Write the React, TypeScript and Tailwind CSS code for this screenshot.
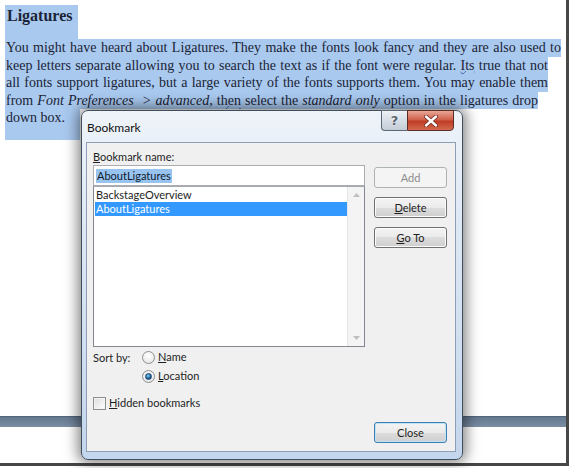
import React from "react";

const ui = "font-['Lato',sans-serif] text-[11px] text-[#1e1e1e]";

function WinButton({
  children,
  disabled,
  primary,
  className = "",
}: {
  children: React.ReactNode;
  disabled?: boolean;
  primary?: boolean;
  className?: string;
}) {
  if (disabled) {
    return (
      <div
        className={`h-[21px] w-[73px] rounded-[3px] border border-[#adb2b5] bg-[#f4f4f4] flex items-center justify-center text-[#8c8c8c] leading-none ${className}`}
      >
        {children}
      </div>
    );
  }
  return (
    <div
      className={`h-[21px] w-[73px] rounded-[3px] border ${
        primary ? "border-[#3c7fb1] shadow-[inset_0_0_0_1px_#bfe3f7]" : "border-[#707070] shadow-[inset_0_0_0_1px_#fcfcfc]"
      } bg-[linear-gradient(#f3f3f3,#ebebeb_50%,#dddddd_50%,#cfcfcf)] flex items-center justify-center leading-none ${className}`}
    >
      {children}
    </div>
  );
}

function Radio({ checked }: { checked?: boolean }) {
  return (
    <div className="w-[13px] h-[13px] rounded-full border border-[#8e8f8f] bg-[radial-gradient(circle_at_50%_35%,#ffffff,#e2e2e2)] flex items-center justify-center">
      {checked && (
        <div className="w-[7px] h-[7px] rounded-full bg-[radial-gradient(circle_at_40%_35%,#8fd0f5,#1d5e96_60%,#0e3a66)] border border-[#15446f]" />
      )}
    </div>
  );
}

export default function App() {
  const hl = "bg-[#a9c9ef]";
  const squiggle = "underline decoration-wavy decoration-[#3a5ea8] decoration-1 underline-offset-[0px]";
  return (
    <div className="relative w-[571px] h-[468px] bg-white overflow-hidden">
      <div className="w-[569px] h-[466px] border-r-[3px] border-b-[3px] border-[#474747] flex flex-col">
        <div className="pt-[5px] pl-[5px] font-['Liberation_Serif',serif] text-[#1b2436] text-[14px]">
          <div className={`${hl} w-[73px] h-[34px]`}>
            <div className="pl-[2px] text-[16px] font-bold leading-[22px]">Ligatures</div>
          </div>
          <div className={`${hl} w-[556px] h-[17.5px] leading-[17.5px] text-justify [text-align-last:justify] pl-[1px]`}>
            You might have heard about Ligatures. They make the fonts look fancy and they are also used to
          </div>
          <div className={`${hl} w-[543px] h-[17.5px] leading-[17.5px] text-justify [text-align-last:justify] pl-[1px]`}>
            keep letters separate allowing you to search the text as if the font were regular.{" "}
            <span className={squiggle}>Its</span> true that not
          </div>
          <div className={`${hl} w-[543px] h-[17.5px] leading-[17.5px] text-justify [text-align-last:justify] pl-[1px]`}>
            all fonts support ligatures, but a large variety of the fonts supports them. You may enable them
          </div>
          <div className={`${hl} w-[533px] h-[17.5px] leading-[17.5px] text-justify [text-align-last:justify] pl-[1px]`}>
            from <i>Font Preferences &nbsp;&gt; advanced,</i> <span className={squiggle}>then</span> select the{" "}
            <i>standard only</i> option in the ligatures drop
          </div>
          <div className={`${hl} w-[75px] h-[31px] leading-[17.5px] pl-[1px]`}>down box.</div>
        </div>
        <div className="mt-auto mb-[36px] h-[11px] border-t border-[#51657b] bg-[linear-gradient(#64788f,#7b8ea3)]" />
      </div>

      {/* Dialog */}
      <div
        className={`absolute left-[81px] top-[110px] w-[382px] h-[350px] rounded-[7px] border border-[#3f4d5d] bg-[linear-gradient(#eef3f9,#dbe6f3_40%,#c3d6ed)] shadow-[0_0_14px_3px_rgba(0,0,0,0.5)] flex flex-col pl-[4px] pr-[6px] pb-[7px] ${ui}`}
      >
        <div className="h-[31px] flex justify-between items-start">
          <div className="pt-[9px] pl-[1px] text-[12px] leading-[16px] text-[#111]">Bookmark</div>
          <div className="flex -mt-px mr-[2px]">
            <div className="w-[26px] h-[21px] rounded-bl-[4px] border border-[#5a6878] border-r-0 bg-[linear-gradient(#eef1f5,#d6dde5_50%,#c4ccd6)] flex items-center justify-center">
              <span className="font-['DejaVu_Sans',sans-serif] font-bold text-[13px] leading-none text-[#5b6470] [text-shadow:0_0_2px_#fff]">?</span>
            </div>
            <div className="w-[47px] h-[21px] rounded-br-[4px] border border-[#5b2b26] bg-[linear-gradient(#e9a797,#d0614b_45%,#bf3d24_55%,#d46a4f)] flex items-center justify-center">
              <svg width="14" height="12" viewBox="0 0 14 12">
                <path d="M2 1.5 L12 10.5 M12 1.5 L2 10.5" stroke="#6b2a20" strokeWidth="4" strokeLinecap="round" />
                <path d="M2 1.5 L12 10.5 M12 1.5 L2 10.5" stroke="#ffffff" strokeWidth="2.4" strokeLinecap="round" />
              </svg>
            </div>
          </div>
        </div>

        <div className="flex-1 border border-[#8c9fb5] bg-[#f0f0f0] flex">
          {/* left column */}
          <div className="pl-[6px] w-[278px] flex flex-col">
            <div className="pt-[6px] leading-[16px]">
              <u>B</u>ookmark name:
            </div>
            <div className="h-[21px] border border-[#abadb3] bg-white flex items-center pl-[2px]">
              <span className="bg-[#99c3ef] text-[#0c1a30] leading-[14px] px-[1px]">AboutLigatures</span>
            </div>
            <div className="h-[161px] border border-[#828790] border-t-[#a5a9b0] bg-white flex">
              <div className="flex-1 pt-[1px] pl-[1px]">
                <div className="h-[14px] leading-[14px] pl-[1px]">BackstageOverview</div>
                <div className="h-[14px] leading-[14px] pl-[1px] bg-[#3399ff] text-white">AboutLigatures</div>
              </div>
              <div className="w-[17px] bg-[#f4f4f4] border-l border-[#e6e6e6] flex flex-col justify-between items-center py-[6px]">
                <svg width="7" height="4" viewBox="0 0 7 4">
                  <path d="M0 4 L3.5 0 L7 4 Z" fill="#bfbfbf" />
                </svg>
                <svg width="7" height="4" viewBox="0 0 7 4">
                  <path d="M0 0 L3.5 4 L7 0 Z" fill="#bfbfbf" />
                </svg>
              </div>
            </div>
            <div className="mt-[1px] flex">
              <div className="w-[49px] h-[19px] leading-[19px]">Sort by:</div>
              <div className="flex flex-col">
                <div className="h-[19px] flex items-center gap-[3px]">
                  <Radio />
                  <span>
                    <u>N</u>ame
                  </span>
                </div>
                <div className="h-[19px] flex items-center gap-[3px]">
                  <Radio checked />
                  <span>
                    <u>L</u>ocation
                  </span>
                </div>
              </div>
            </div>
            <div className="mt-[8px] h-[19px] flex items-center gap-[3px]">
              <div className="w-[13px] h-[13px] border border-[#8e8f8f] bg-[linear-gradient(135deg,#dcdcdc,#ffffff)] shadow-[inset_0_0_0_1px_#f4f4f4]" />
              <span>
                <u>H</u>idden bookmarks
              </span>
            </div>
          </div>
          {/* right column */}
          <div className="ml-[9px] pt-[24px] flex flex-col">
            <WinButton disabled>Add</WinButton>
            <WinButton className="mt-[9px]">
              <span>
                <u>D</u>elete
              </span>
            </WinButton>
            <WinButton className="mt-[9px]">
              <span>
                <u>G</u>o To
              </span>
            </WinButton>
            <WinButton primary className="mt-[174px]">
              Close
            </WinButton>
          </div>
        </div>
      </div>
    </div>
  );
}
